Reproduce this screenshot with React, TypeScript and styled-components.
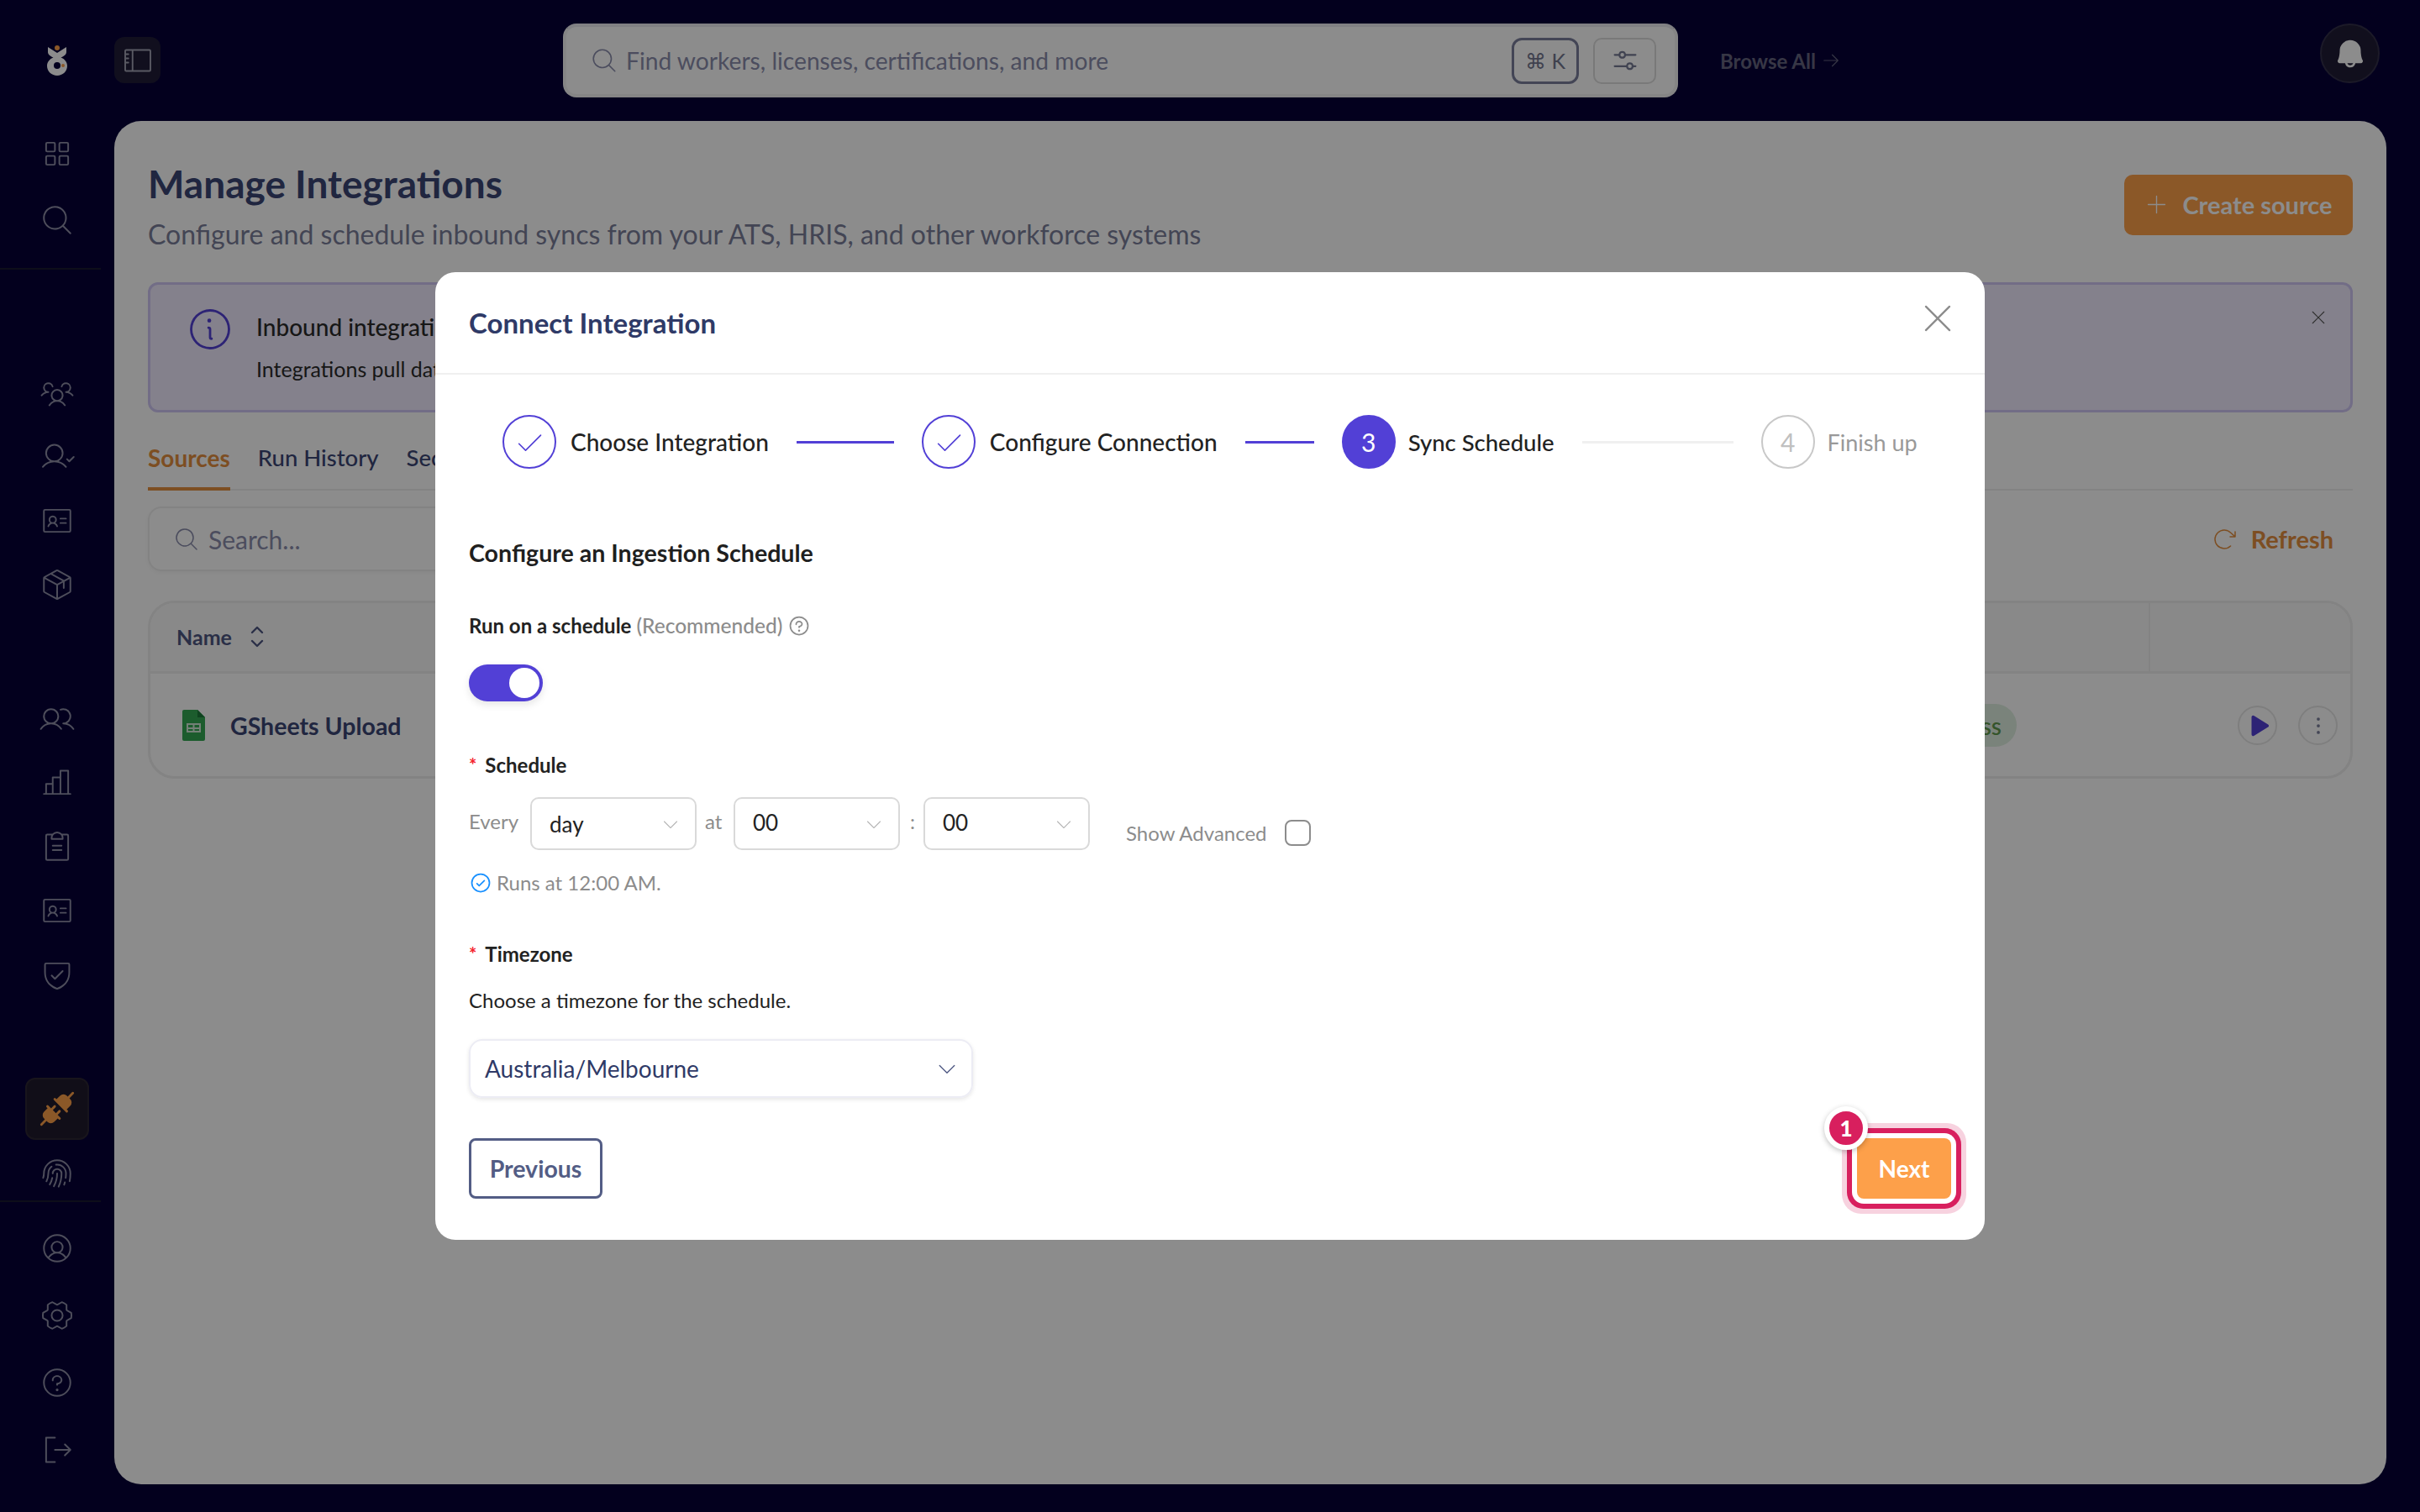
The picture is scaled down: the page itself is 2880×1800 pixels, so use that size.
import React from "react";
import styled, { createGlobalStyle } from "styled-components";
import {
  PiSquaresFourLight, PiMagnifyingGlassLight, PiUsersThreeLight, PiUserCheckLight, PiIdentificationCardLight,
  PiPackageLight, PiUsersLight, PiChartBarLight, PiClipboardTextLight, PiShieldCheckLight, PiPlugsFill,
  PiFingerprintLight, PiUserCircleLight, PiGearSixLight, PiQuestionLight, PiSignOutLight, PiSidebarLight,
  PiBellFill, PiXLight, PiSlidersHorizontal, PiArrowClockwiseLight, PiPlusLight, PiCheckLight, PiPlayFill,
  PiDotsThreeVerticalBold, PiInfoLight, PiArrowRightLight, PiCaretDownLight, PiQuestion, PiCheckCircle,
} from "react-icons/pi";

const Global = createGlobalStyle`
  html, body { margin: 0; padding: 0; }
  body { font-family: "Lato", "Open Sans", sans-serif; background: #070038; overflow: hidden; }
  * { box-sizing: border-box; }
`;

const Shell = styled.div`
  width: 2880px; height: 1800px; display: grid; grid-template-columns: 136px 1fr; background: #070038;
`;
const Sidebar = styled.aside`display: flex; flex-direction: column; color: #8e8ea6;`;
const LogoSlot = styled.div`height: 143px; display: flex; align-items: center; justify-content: center;`;
const NavGroup = styled.div<{ $top: number; $gap?: number }>`
  display: flex; flex-direction: column; margin-top: ${(p) => p.$top}px; gap: ${(p) => p.$gap ?? 0}px;
`;
const NavItem = styled.div<{ $h: number }>`
  height: ${(p) => p.$h}px; display: flex; align-items: center; justify-content: center; font-size: 42px;
`;
const ActiveItem = styled.div`
  width: 76px; height: 74px; margin-left: 30px; border-radius: 12px; background: #1f1a2c; border: 2px solid #2d2733;
  display: flex; align-items: center; justify-content: center; font-size: 46px; color: #fda04a;
`;
const SideRule = styled.div<{ $top: number }>`
  width: 120px; height: 2px; background: #1a1a30; margin-top: ${(p) => p.$top}px;
`;

const Main = styled.main`display: flex; flex-direction: column; padding-right: 40px;`;
const TopBar = styled.header`height: 144px; display: flex; align-items: center; color: #8e8ea6;`;
const ToggleBtn = styled.div`
  width: 55px; height: 55px; border-radius: 12px; background: #1f1c38; display: flex; align-items: center;
  justify-content: center; font-size: 40px; margin-top: -1px; color: #a5a5b5;
`;
const SearchBar = styled.div`
  width: 1327px; height: 88px; margin-left: 479px; border-radius: 16px; background: #fff; border: 4px solid #f3f3f3;
  border-top-color: #e9e9ee; display: flex; align-items: center; padding: 0 22px 0 28px; color: #8a8dac;
`;
const SearchIcon = styled.span`font-size: 34px; display: flex; margin-right: 9px;`;
const SearchText = styled.span`font-size: 28.2px; flex: 1;`;
const Kbd = styled.div`
  width: 80px; height: 55px; border: 3px solid #7a7f9c; border-radius: 12px; display: flex; align-items: center;
  justify-content: center; font-size: 25px; color: #73778f; gap: 6px; font-family: "Lato", "DejaVu Sans", sans-serif;
`;
const FilterBtn = styled.div`
  width: 75px; height: 55px; margin-left: 17px; border: 2px solid #ddd; border-radius: 10px; display: flex;
  align-items: center; justify-content: center; font-size: 36px; color: #767a94;
`;
const BrowseAll = styled.div`
  margin-left: 50px; font-size: 24px; font-weight: 700; color: #65657f; display: flex; align-items: center; gap: 6px;
`;
const BellWrap = styled.div`
  margin-left: auto; margin-right: 8px; width: 71px; height: 71px; border-radius: 50%; background: #201d36;
  border: 2px solid #33304a; display: flex; align-items: center; justify-content: center; font-size: 40px;
  color: #fff; align-self: flex-start; margin-top: 28px;
`;

const Panel = styled.section`
  width: 2704px; height: 1623px; border-radius: 32px; background: #fff; padding: 47px 40px 0;
  display: flex; flex-direction: column;
`;
const PageHead = styled.div`display: flex; justify-content: space-between; align-items: flex-start;`;
const HeadText = styled.div`display: flex; flex-direction: column; gap: 10px;`;
const PageTitle = styled.h1`margin: 0; font-size: 46px; line-height: 56px; font-weight: 700; color: #3b4675;`;
const PageSub = styled.p`margin: 0; font-size: 32px; line-height: 44px; color: #7a7e9a;`;
const CreateBtn = styled.div`
  margin-top: 17px; width: 272px; height: 72px; background: #fda04a; border-radius: 10px; color: #fff; display: flex;
  align-items: center; justify-content: center; gap: 16px; font-size: 29px; font-weight: 700; padding-bottom: 1px;
`;
const Alert = styled.div`
  margin-top: 35px; height: 155px; border: 3px solid #cfc6f5; border-radius: 12px; background: #f1ecff; padding: 23px 40px 0 41px;
  display: flex; position: relative;
`;
const AlertIcon = styled.span`font-size: 60px; display: flex; color: #5240d6; margin: 0 25px 0 0; height: 60px;`;
const AlertBody = styled.div`display: flex; flex-direction: column; gap: 10px; margin-top: 5px;`;
const AlertTitle = styled.div`font-size: 28px; line-height: 44px; font-weight: 500; color: #2a2a2a; white-space: nowrap;`;
const AlertSub = styled.div`font-size: 25px; line-height: 36px; color: #2a2a2a; white-space: nowrap;`;
const AlertClose = styled.span`position: absolute; right: 26px; top: 27px; font-size: 24px; color: #555; display: flex;`;
const Tabs = styled.div`margin-top: 34px; display: flex; gap: 33px; border-bottom: 2px solid #eee;`;
const Tab = styled.div<{ $active?: boolean }>`
  font-size: ${(p) => (p.$active ? 28 : 27.5)}px; line-height: 40px; padding-bottom: 15px; font-weight: ${(p) => (p.$active ? 700 : 500)};
  color: ${(p) => (p.$active ? "#e48f3f" : "#3b4675")}; margin-bottom: -2px;
  border-bottom: 4px solid ${(p) => (p.$active ? "#e48f3f" : "transparent")};
`;
const ToolRow = styled.div`margin-top: 19px; display: flex; align-items: center; justify-content: space-between; padding-right: 23px;`;
const TableSearch = styled.div`
  width: 800px; height: 77px; border: 2px solid #eee; border-radius: 16px; box-shadow: 0 2px 4px #0000000a; display: flex;
  align-items: center; padding-left: 28px; gap: 10px; font-size: 30px; color: #8a8dac;
`;
const TableSearchIcon = styled.span`font-size: 32px; display: flex;`;
const Refresh = styled.div`display: flex; align-items: center; gap: 16px; font-size: 29px; font-weight: 700; color: #e48f3f;`;
const RefreshIcon = styled.span`font-size: 32px; display: flex;`;
const Table = styled.div`margin-top: 35px; height: 212px; border: 3px solid #eee; border-radius: 32px; overflow: hidden;`;
const TableHead = styled.div`height: 84px; background: #f9f9f9; border-bottom: 3px solid #eee; display: flex; padding-left: 31px;`;
const HeadName = styled.div`display: flex; align-items: center; gap: 22px; font-size: 25px; font-weight: 700; color: #4d5782; flex: 1; padding-bottom: 2px;`;
const HeadDiv = styled.div`width: 2px; height: 100%; background: #eee; margin-right: 238px;`;
const TableRow = styled.div`height: 123px; display: flex; align-items: center; padding-left: 38px;`;
const RowName = styled.div`display: flex; align-items: center; gap: 30px; font-size: 28.5px; font-weight: 700; color: #3b4675; flex: 1;`;
const Badge = styled.div`
  width: 200px; height: 51px; border-radius: 26px; background: #dfeee0; color: #5f9a4d; font-size: 28px; font-weight: 500;
  display: flex; align-items: center; justify-content: flex-end; padding-right: 18px; margin-right: 157px;
`;
const Actions = styled.div`width: 240px; display: flex; justify-content: flex-end; gap: 25px; padding-right: 15px;`;
const RoundBtn = styled.div<{ $c: string }>`
  width: 47px; height: 47px; border: 2px solid #e6e6e6; border-radius: 50%; display: flex; align-items: center;
  justify-content: center; font-size: 30px; color: ${(p) => p.$c};
`;

const Overlay = styled.div`
  position: fixed; inset: 0; background: rgba(0, 0, 0, .45); display: flex; align-items: center; justify-content: center;
`;
const Modal = styled.div`
  width: 1844px; height: 1152px; background: #fff; border-radius: 24px; display: flex; flex-direction: column;
  position: relative;
`;
const ModalHead = styled.div`
  height: 122px; border-bottom: 2px solid #f0f0f0; display: flex; align-items: center; justify-content: space-between;
  padding: 0 31px 0 40px; flex: none;
`;
const ModalTitle = styled.h2`margin: 0; font-size: 33px; font-weight: 700; color: #2f3a67;`;
const ModalClose = styled.span`font-size: 50px; color: #8c8c8c; display: flex; margin-top: -10px;`;
const ModalBody = styled.div`padding: 0 40px; display: flex; flex-direction: column; flex: 1; position: relative;`;
const Stepper = styled.div`display: flex; align-items: center; margin: 48px 0 0 40px; height: 64px;`;
const StepCircle = styled.div<{ $state: "done" | "now" | "todo" }>`
  width: 64px; height: 64px; border-radius: 50%; display: flex; align-items: center; justify-content: center; font-size: ${(p) => (p.$state === "done" ? 36 : 30)}px;
  border: 2px solid ${(p) => (p.$state === "todo" ? "#c8c8c8" : "#5240d6")};
  background: ${(p) => (p.$state === "now" ? "#5240d6" : "#fff")};
  color: ${(p) => (p.$state === "now" ? "#fff" : p.$state === "done" ? "#5240d6" : "#c0c0c0")};
`;
const StepLabel = styled.div<{ $muted?: boolean; $size?: number }>`
  margin-left: ${(p) => (p.$size ? 15 : 17)}px; font-size: ${(p) => p.$size ?? 28}px; font-weight: ${(p) => (p.$muted ? 400 : 500)};
  color: ${(p) => (p.$muted ? "#999" : "#222")}; white-space: nowrap;
`;
const StepLine = styled.div<{ $w: number; $on?: boolean }>`
  width: ${(p) => p.$w}px; height: 3px; margin: 0 33px; background: ${(p) => (p.$on ? "#5240d6" : "#f0f0f0")};
`;
const SectionTitle = styled.h3`margin: 82px 0 0; font-size: 28.6px; line-height: 36px; font-weight: 700; color: #1f1f1f;`;
const FieldLabel = styled.div<{ $top: number }>`
  margin-top: ${(p) => p.$top}px; display: flex; align-items: center; font-size: 24px; line-height: 32px; font-weight: 700; color: #222;
`;
const Muted = styled.span`font-weight: 500; font-size: 24.5px; color: #8c8c8c; margin-left: 6px;`;
const HelpIcon = styled.span`font-size: 28px; color: #8c8c8c; display: flex; margin-left: 6px;`;
const Star = styled.span`color: #f5222d; margin-right: 10px; font-size: 22px;`;
const Toggle = styled.div`
  margin-top: 30px; width: 88px; height: 44px; border-radius: 22px; background: #5240d6; position: relative;
  box-shadow: 0 4px 10px #0000001a; flex: none;
`;
const Knob = styled.div`position: absolute; right: 4px; top: 4px; width: 36px; height: 36px; border-radius: 50%; background: #fff;`;
const ScheduleRow = styled.div`margin-top: 22px; display: flex; align-items: flex-start; height: 63px;`;
const RowWord = styled.span<{ $w: number; $pad?: number }>`
  font-size: 24px; line-height: 58px; color: #8c8c8c; width: ${(p) => p.$w}px; padding-left: ${(p) => p.$pad ?? 0}px; flex: none;
`;
const MiniSelect = styled.div`
  width: 198px; height: 63px; border: 2px solid #d9d9d9; border-radius: 10px; display: flex; align-items: center;
  justify-content: space-between; padding: 0 17px 0 21px; font-size: 26px; color: #222; flex: none;
`;
const SelValue = styled.span<{ $lift?: boolean }>`margin-top: ${(p) => (p.$lift ? -4 : 0)}px;`;
const SelCaret = styled.span`font-size: 24px; color: #b5b5b5; display: flex;`;
const Advanced = styled.div`
  display: flex; align-items: center; margin-left: 43px; margin-top: 27px; font-size: 24px; color: #8c8c8c; gap: 21px; flex: none;
`;
const CheckBox = styled.div`width: 31px; height: 31px; border: 2px solid #8c8c8c; border-radius: 8px;`;
const Runs = styled.div`margin-top: 24px; display: flex; align-items: center; gap: 5px; font-size: 24px; line-height: 30px; color: #8c8c8c;`;
const RunsIcon = styled.span`font-size: 28px; color: #1890ff; display: flex;`;
const Hint = styled.div`margin-top: 23px; font-size: 24px; line-height: 32px; color: #222;`;
const ZoneSelect = styled.div`
  margin-top: 30px; width: 600px; height: 70px; border: 2px solid #ececf4; border-radius: 16px; box-shadow: 0 2px 5px #0000001a;
  display: flex; align-items: center; justify-content: space-between; padding: 0 15px 0 17px; font-size: 28px; color: #2f3a67;
`;
const ZoneCaret = styled.span`font-size: 28px; color: #4d5782; display: flex;`;
const Footer = styled.div`margin-top: 48px; display: flex; justify-content: space-between;`;
const PrevBtn = styled.div`
  width: 159px; height: 72px; border: 3px solid #535d85; border-radius: 8px; display: flex; align-items: center;
  justify-content: center; font-size: 28.5px; font-weight: 700; color: #535d85;
`;
const NextBtn = styled.div`
  width: 112px; height: 72px; border-radius: 8px; background: #fda04a; color: #fff; display: flex; align-items: center;
  justify-content: center; font-size: 28px; font-weight: 700; position: relative;
  box-shadow: 0 0 0 6px #fff, 0 0 0 12px #d81f5e, 0 0 0 18px #f7d2df;
`;
const Marker = styled.div`
  position: absolute; left: -39px; top: -38px; width: 52px; height: 52px; border-radius: 50%; background: #d81f5e;
  border: 6px solid #fff; box-shadow: 0 2px 6px #00000040; display: flex; align-items: center; justify-content: center;
  font-size: 26px; font-weight: 900; color: #fff;
`;

const Logo = () => (
  <svg width="24" height="36" viewBox="0 0 24 36" aria-hidden="true">
    <path d="M1 2 L12 9 L23 2 V8 C23 11 20 13 16.5 14.5 C21 16 24 20 24 24.5 C24 31 18.5 36 12 36 C5.5 36 0 31 0 24.5 C0 20 3 16 7.5 14.5 C4 13 1 11 1 8 Z" fill="#ffffff" />
    <circle cx="12" cy="3" r="3" fill="#fda04a" />
    <circle cx="12" cy="24" r="4" fill="#070038" />
    <circle cx="19" cy="24" r="2" fill="#fda04a" />
  </svg>
);

const SheetIcon = () => (
  <svg width="27" height="37" viewBox="0 0 27 37" aria-hidden="true">
    <path d="M2 0 H18 L27 9 V35 a2 2 0 0 1 -2 2 H2 a2 2 0 0 1 -2 -2 V2 a2 2 0 0 1 2 -2 Z" fill="#34a853" />
    <path d="M18 0 L27 9 H18 Z" fill="#1c7b3a" />
    <path d="M5 16 H22 V27 H5 Z M7 18 V21 H12.5 V18 Z M14.5 18 V21 H20 V18 Z M7 23 V25 H12.5 V23 Z M14.5 23 V25 H20 V23 Z" fill="#d4ead9" fillRule="evenodd" />
  </svg>
);

const SortIcon = () => (
  <svg width="16" height="26" viewBox="0 0 16 26" fill="none" stroke="#4d5782" strokeWidth="2.4" strokeLinecap="round" strokeLinejoin="round" aria-hidden="true">
    <path d="M2 8 L8 2 L14 8" />
    <path d="M2 18 L8 24 L14 18" />
  </svg>
);

const sideTop = [<PiSquaresFourLight />, <PiMagnifyingGlassLight />];
const sideA = [<PiUsersThreeLight />, <PiUserCheckLight />, <PiIdentificationCardLight />, <PiPackageLight />];
const sideB = [<PiUsersLight />, <PiChartBarLight />, <PiClipboardTextLight />, <PiIdentificationCardLight />, <PiShieldCheckLight />];
const sideC = [<PiUserCircleLight />, <PiGearSixLight />, <PiQuestionLight />, <PiSignOutLight />];

const renderItems = (items: React.ReactNode[], h: number) =>
  items.map((icon, i) => <NavItem key={i} $h={h}>{icon}</NavItem>);

export default function App() {
  return (
    <>
      <Global />
      <Shell>
        <Sidebar>
          <LogoSlot><Logo /></LogoSlot>
          <NavGroup $top={0}>{renderItems(sideTop, 79)}</NavGroup>
          <SideRule $top={18} />
          <NavGroup $top={109}>{renderItems(sideA, 76)}</NavGroup>
          <NavGroup $top={84}>{renderItems(sideB, 76)}</NavGroup>
          <NavGroup $top={85} $gap={8}>
            <ActiveItem><PiPlugsFill /></ActiveItem>
            <NavItem $h={64}><PiFingerprintLight /></NavItem>
          </NavGroup>
          <SideRule $top={0} />
          <NavGroup $top={15}>{renderItems(sideC, 80)}</NavGroup>
        </Sidebar>
        <Main>
          <TopBar>
            <ToggleBtn><PiSidebarLight /></ToggleBtn>
            <SearchBar>
              <SearchIcon><PiMagnifyingGlassLight /></SearchIcon>
              <SearchText>Find workers, licenses, certifications, and more</SearchText>
              <Kbd>⌘ K</Kbd>
              <FilterBtn><PiSlidersHorizontal /></FilterBtn>
            </SearchBar>
            <BrowseAll>Browse All <PiArrowRightLight /></BrowseAll>
            <BellWrap><PiBellFill /></BellWrap>
          </TopBar>
          <Panel>
            <PageHead>
              <HeadText>
                <PageTitle>Manage Integrations</PageTitle>
                <PageSub>Configure and schedule inbound syncs from your ATS, HRIS, and other workforce systems</PageSub>
              </HeadText>
              <CreateBtn><PiPlusLight />Create source</CreateBtn>
            </PageHead>
            <Alert>
              <AlertIcon><PiInfoLight /></AlertIcon>
              <AlertBody>
                <AlertTitle>Inbound integrations</AlertTitle>
                <AlertSub>Integrations pull data from your source systems</AlertSub>
              </AlertBody>
              <AlertClose><PiXLight /></AlertClose>
            </Alert>
            <Tabs>
              <Tab $active>Sources</Tab>
              <Tab>Run History</Tab>
              <Tab>Secrets</Tab>
            </Tabs>
            <ToolRow>
              <TableSearch><TableSearchIcon><PiMagnifyingGlassLight /></TableSearchIcon>Search...</TableSearch>
              <Refresh><RefreshIcon><PiArrowClockwiseLight /></RefreshIcon>Refresh</Refresh>
            </ToolRow>
            <Table>
              <TableHead>
                <HeadName>Name <SortIcon /></HeadName>
                <HeadDiv />
              </TableHead>
              <TableRow>
                <RowName><SheetIcon />GSheets Upload</RowName>
                <Badge>Success</Badge>
                <Actions>
                  <RoundBtn $c="#5240d6"><PiPlayFill /></RoundBtn>
                  <RoundBtn $c="#7a7f9c"><PiDotsThreeVerticalBold /></RoundBtn>
                </Actions>
              </TableRow>
            </Table>
          </Panel>
        </Main>
      </Shell>
      <Overlay>
        <Modal>
          <ModalHead>
            <ModalTitle>Connect Integration</ModalTitle>
            <ModalClose><PiXLight /></ModalClose>
          </ModalHead>
          <ModalBody>
            <Stepper>
              <StepCircle $state="done"><PiCheckLight /></StepCircle>
              <StepLabel>Choose Integration</StepLabel>
              <StepLine $w={116} $on />
              <StepCircle $state="done"><PiCheckLight /></StepCircle>
              <StepLabel>Configure Connection</StepLabel>
              <StepLine $w={82} $on />
              <StepCircle $state="now">3</StepCircle>
              <StepLabel $size={27.5}>Sync Schedule</StepLabel>
              <StepLine $w={180} />
              <StepCircle $state="todo">4</StepCircle>
              <StepLabel $muted $size={27}>Finish up</StepLabel>
            </Stepper>
            <SectionTitle>Configure an Ingestion Schedule</SectionTitle>
            <FieldLabel $top={53}>Run on a schedule<Muted>(Recommended)</Muted><HelpIcon><PiQuestion /></HelpIcon></FieldLabel>
            <Toggle><Knob /></Toggle>
            <FieldLabel $top={60}><Star>*</Star>Schedule</FieldLabel>
            <ScheduleRow>
              <RowWord $w={73}>Every</RowWord>
              <MiniSelect>day<SelCaret><PiCaretDownLight /></SelCaret></MiniSelect>
              <RowWord $w={44} $pad={10}>at</RowWord>
              <MiniSelect><SelValue $lift>00</SelValue><SelCaret><PiCaretDownLight /></SelCaret></MiniSelect>
              <RowWord $w={28} $pad={12}>:</RowWord>
              <MiniSelect><SelValue $lift>00</SelValue><SelCaret><PiCaretDownLight /></SelCaret></MiniSelect>
              <Advanced>Show Advanced<CheckBox /></Advanced>
            </ScheduleRow>
            <Runs><RunsIcon><PiCheckCircle /></RunsIcon>Runs at 12:00 AM.</Runs>
            <FieldLabel $top={54}><Star>*</Star>Timezone</FieldLabel>
            <Hint>Choose a timezone for the schedule.</Hint>
            <ZoneSelect>Australia/Melbourne<ZoneCaret><PiCaretDownLight /></ZoneCaret></ZoneSelect>
            <Footer>
              <PrevBtn>Previous</PrevBtn>
              <NextBtn>Next<Marker>1</Marker></NextBtn>
            </Footer>
          </ModalBody>
        </Modal>
      </Overlay>
    </>
  );
}
